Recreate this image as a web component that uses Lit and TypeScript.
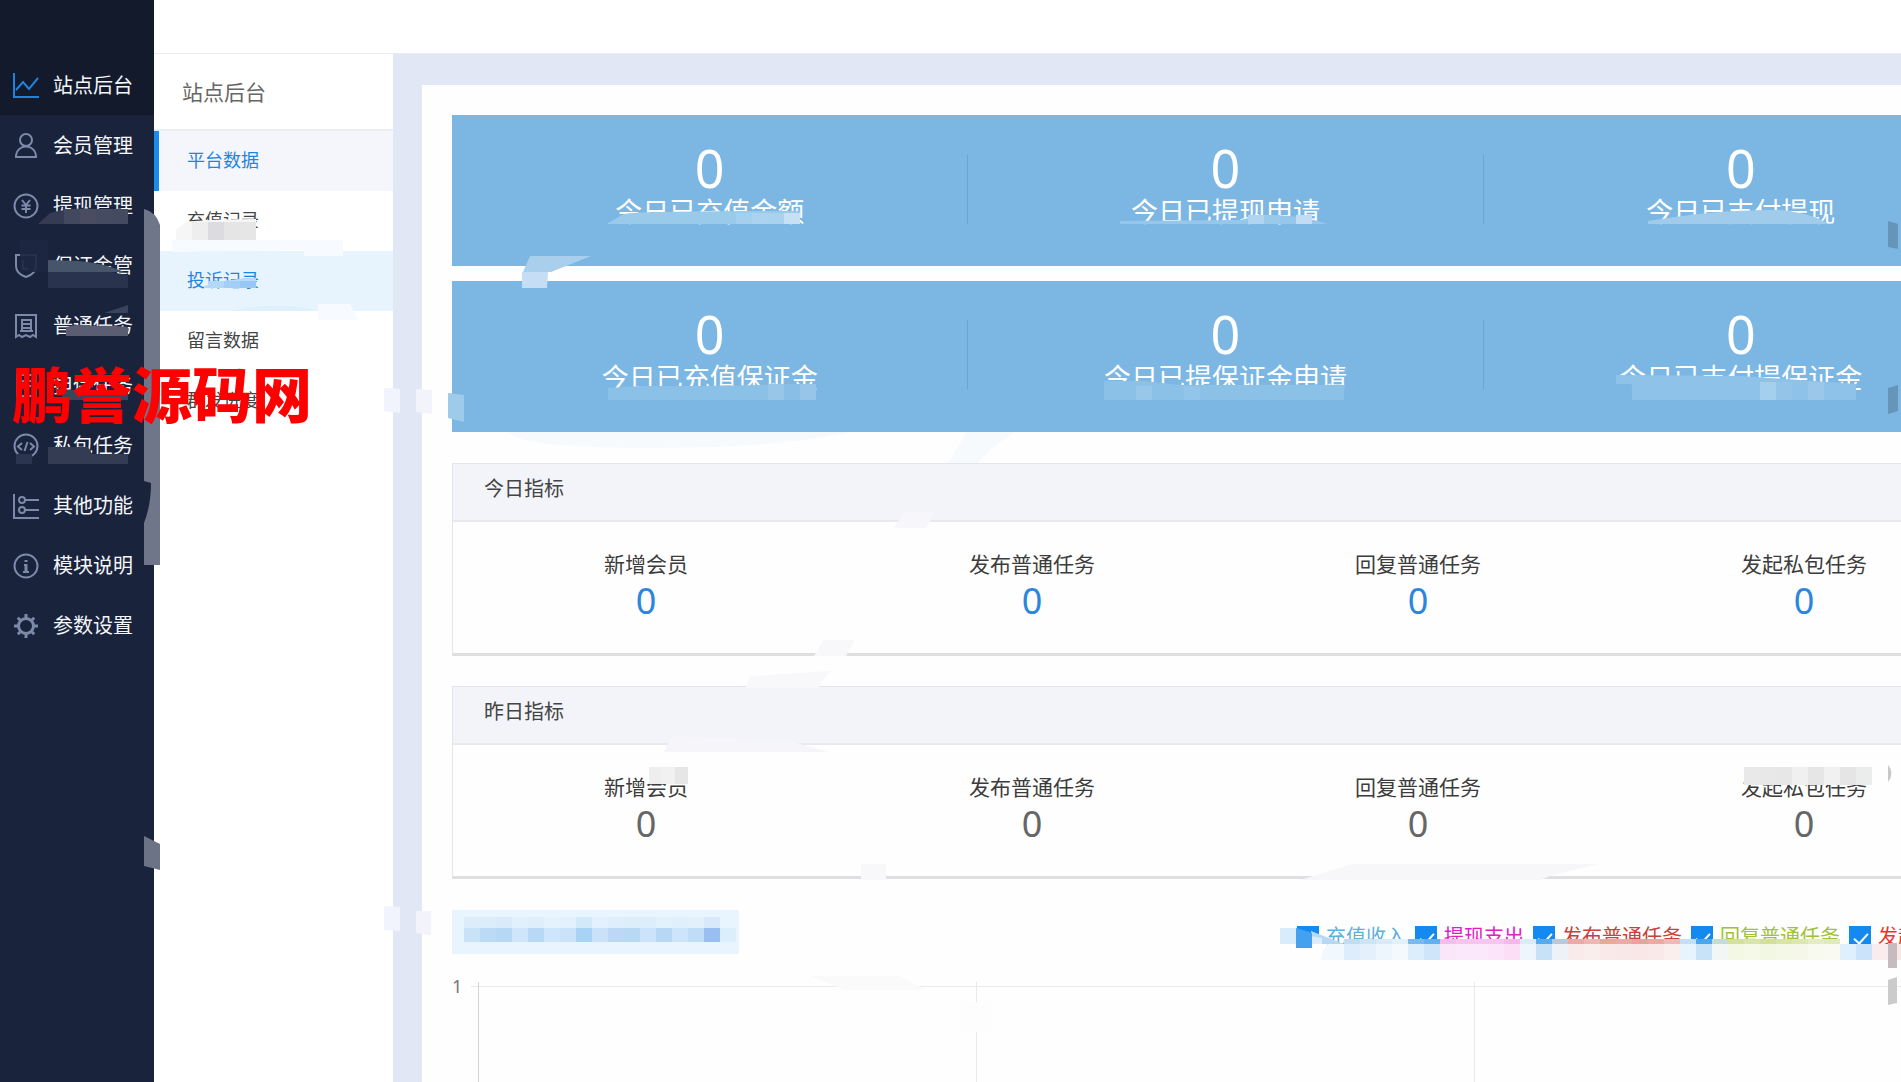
import { LitElement, html, css, svg, type TemplateResult } from "lit";
import { customElement, state } from "lit/decorators.js";

const icons: Record<string, TemplateResult> = {
  chart: svg`<path d="M1 0v24h25M3 17l7-8 6 7 9-11"/>`,
  user: svg`<circle cx="13" cy="7" r="6"/><path d="M3 24c0-14 20-14 20 0z"/>`,
  yen: svg`<circle cx="13" cy="13" r="11.5"/><path d="M9 7l4 5 4-5M13 12v8M8.500 12.500h9M8.500 16h9"/>`,
  shield: svg`<path d="M3 2h20v11c0 6-4 9-10 11C7 22 3 19 3 13zM10 7v9h5"/>`,
  receipt: svg`<path d="M3 2h20v22l-3-2-3 2-4-2-4 2-3-2-3 2zM9 18V7h9v11M9 11h9M9 15h9M7 18h13"/>`,
  deposit: svg`<path d="M4 2h19v21H4zM9 8h9M9 13h9"/>`,
  code: svg`<circle cx="13" cy="13" r="11.500"/><path d="M9 10l-4 3.500 4 3.500M17 10l4 3.500-4 3.500M14.500 9l-3 9"/>`,
  sliders: svg`<path d="M1 1v24h25M12 7h14M12 17h14"/><circle cx="9" cy="7" r="3"/><circle cx="9" cy="17" r="3"/>`,
  info: svg`<circle cx="13" cy="13" r="11.500"/><path d="M13 11v8M13 7v2" stroke-width="3"/><path d="M11 12h2M10 19h6"/>`,
  gear: svg`<circle cx="13" cy="13" r="7.500" stroke-width="3"/><path stroke-width="3" d="M13 5V1M13 25v-4M5 13H1M25 13h-4M7.300 7.300L4.800 4.800M21.200 21.200l-2.500-2.500M7.300 18.700l-2.500 2.500M21.200 4.800l-2.500 2.500"/>`,
};

const modules = [
  ["chart", "站点后台"], ["user", "会员管理"], ["yen", "提现管理"], ["shield", "保证金管"],
  ["receipt", "普通任务"], ["deposit", "担保任务"], ["code", "私包任务"], ["sliders", "其他功能"],
  ["info", "模块说明"], ["gear", "参数设置"],
];
const pages = ["平台数据", "充值记录", "投诉记录", "留言数据", "群发进度"];
const totals = [
  ["今日已充值金额", "今日已提现申请", "今日已支付提现"],
  ["今日已充值保证金", "今日已提保证金申请", "今日已支付提保证金"],
];
const metrics = ["新增会员", "发布普通任务", "回复普通任务", "发起私包任务"];
const series = [
  { name: "充值收入", color: "#5cb0dc" },
  { name: "提现支出", color: "#e020c4" },
  { name: "发布普通任务", color: "#c8403a" },
  { name: "回复普通任务", color: "#a0c234" },
  { name: "发起私包任务", color: "#e8352c" },
];

/** One smudge: fill, path data and optional opacity. */
type Smudge = [string, string, number?];
/** A row of equal tiles: x, y, tile width, tile height, fills ("" leaves a gap). */
type Tiles = [number, number, number, number, string[]];

const smudges: Smudge[] = [
  // left navigation
  ["#343b53", "M38 224L50 213Q70 207 100 209H128V224H38z"],
  ["#1d2741", "M20 240h28v32H20z", 0.9],
  ["#46556a", "M48 260L78 261Q110 264 128 274V272H48z"],
  ["#2a334d", "M48 272H110L128 275V288H48z"],
  ["#39435b", "M104 313L128 305V313z"],
  ["#5b5d73", "M66 327Q80 323 94 326Q110 325 128 327V336H66z"],
  ["#3c4459", "M62 390h66v10H62z"],
  ["#2c3550", "M16 454h16v10H16z"],
  ["#343c54", "M48 447H88L92 454H128V464H48z"],
  // page list
  ["#f6f6f6", "M176 230L186 222Q210 219 256 219V240H176z"],
  ["#f7fbff", "M172 240H343V256H304V250L172 252z"],
  ["#b9dafa", "M204 286Q230 278 256 278V288H204z"],
  ["#f7fbff", "M318 304H350L358 320H318z"],
  ["#dff0fd", "M230 311Q280 300 318 311z"],
  // frame edge
  ["#f1f4fc", "M384 388l16 1v24l-16-2z"], ["#f2f3fb", "M416 389l16 1v24l-16-2z"],
  ["#f1f4fc", "M384 906l16 1v24l-16-1z"], ["#f2f3fb", "M416 911h15v24l-15-2z"],
  ["#9dcbe9", "M448 393l16 2v27l-16-4z"],
  // summary cards
  ["#aacfed", "M530 256H591L551 272H523z"], ["#c6def5", "M522 272H548L547 288H522z"],
  ["#9acaea", "M608 223L624 214Q640 211 800 211V224H608z"],
  ["#96c6ea", "M1120 224V221L1240 220Q1280 209 1328 224z"],
  ["#a0cbeb", "M1648 224V221Q1720 209 1780 210Q1815 214 1828 224z"],
  ["#8bc0e7", "M608 388L640 386H700L816 384V400H608z"],
  ["#8bc0e7", "M1104 381H1144L1180 385H1344V400H1104z"],
  ["#8fc2e8", "M1616 375L1740 376L1856 384V400H1632V384H1616z"],
  ["#f7fafd", "M507 432H850Q780 448 650 448T507 432z"],
  ["#f7fafd", "M967 432H1014L990 450L978 463H948z"],
  // panels
  ["#f6f6fb", "M904 512H935L926 528H894z"],
  ["#f8f8fa", "M824 640H855L846 656H814z"],
  ["#f8f8fb", "M750 676L830 671L818 688H745z"],
  ["#f5f5fa", "M672 736L790 741L828 752H664z"],
  ["#f8f8fa", "M861 864h25v16h-25z"],
  ["#f7f7f9", "M1352 864H1598L1550 876L1540 880H1300z"],
  ["#fafafa", "M810 976H900L926 990H845z"],
  ["#fdfdfd", "M961 1002h30v30h-30z"],
  // legend
  ["#d9ecfb", "M1280 928h16v20h-16z"], ["#b6d8f3", "M1311 931L1344 944H1311z"],
  ["#fefefe", "M1280 944h42v5h-42z"],
  ["#dcecfa", "M1311 936L1322 938V944H1311z"],
  ["#43a1f0", "M1296 928L1312 933V948H1296z"],
  ["#f1f8fe", "M1328 944H1408V960H1321Q1322 950 1328 944z"],
];

const grey: Smudge[] = [
  ["#70768a", "M144 209Q156 212 160 225V565H144V523Q151 505 151 483L144 481z"],
  ["#6d7387", "M144 836l16 8v26l-16-4z"],
  ["#6596ba", "M1888 221l10 3v25l-10-2z"], ["#6596ba", "M1888 388l10-3v26l-10 3z"],
  ["#c8c8c8", "M1888 765q7 8 0 17z"],
  ["#c6bcc0", "M1888 943h9v25h-9z"], ["#cbcbcb", "M1888 980l9-3v26l-9 2z"],
];

const tiles: Tiles[] = [
  [48, 209, 16, 15, ["", "#42485e", "#4a4d62", "#454b61", "#444a60"]],
  [192, 222, 16, 18, ["#eeeeee", "#dcdce0", "#e5e5e6", "#e6e6e6"]],
  [192, 281, 16, 7, ["", "#b4d8fa", "#a5cef6", "#98c7f5"]],
  [736, 213, 16, 11, ["#a5d0ed", "#abd2ee", "#a9d2ee", "#c6e1f4"]],
  [1248, 215, 16, 9, ["#b1d5f0", "#9acaea", "", "#c2ddf3"]],
  [768, 384, 16, 16, ["#97c6e9", "#89bfe6", "#96c5e9"]],
  [1136, 386, 16, 14, ["#99c7ea", "", "", "#93c4e9"]],
  [1760, 382, 16, 18, ["#a5d0ed", "#94c5e9", "", "#9bc8ea"]],
  [649, 767, 13, 17, ["#eeeeee", "#f1f1f1", "#e6e6e6"]],
  [1744, 767, 16, 18, ["#e9e9ea", "#e8e8e8", "#e7e7e8", "#f0f0f0", "#e6e6e6", "#f1f1f1", "#e5e5e5", "#ebecec"]],
  [464, 917, 16, 11, ["#dcecfa", "#dbedfa", "#d9ebfa", "#e0f0fc", "#deeefb", "#e4f2fd", "#e2f1fd", "#d2e9fa", "#e2f1fd", "#deeefc", "#dbeefa", "#dceefb", "#e2f2fd", "#dfeffc", "#e2f0fc", "#d7e9fa"]],
  [464, 928, 16, 14, ["#c8e2f7", "#bbdaf5", "#b7d8f4", "#cfe5fa", "#b7d9f5", "#cee6fb", "#cae3f9", "#a9d3f4", "#c9e1f9", "#bdd8f6", "#b7d9f4", "#cce4fb", "#b6d8f5", "#cde5fb", "#c0ddf7", "#98bef2", "#dbeefc"]],
  [1344, 939, 16, 5, ["#c0def0", "#cde4f3", "#d8eaf6", "#e2f0fa", "#78b9ef", "#62b0f0", "#f3bdec", "#f6c4ef", "#f5c4ef", "#f5c6f0", "#f5b8ed", "#dcebf8", "#55aaf0", "#b9c9da", "#e9aaa8", "#eeb7b3", "#e9a7a2", "#eaaaa6", "#e7a39e", "#ebaaa4", "#f0b9b4", "#c4dff5", "#4ba6f0", "#c4ddd0", "#d5e19b", "#d9e5a6", "#d4e09a", "#d8e5a3", "#dce8ad", "#e5edbf", "#e0ebbd"]],
  [1344, 944, 16, 16, ["#ddedfb", "#e4f1fc", "#edf6fd", "#f3f9fd", "#dcedfb", "#cfe5f9", "#fbe5f9", "#fce8fb", "#fce8fb", "#fce5fa", "#fcdff7", "#eef5fc", "#c7e1f7", "#edf1f8", "#f9ebea", "#faeeed", "#f9e9e8", "#f8e9e8", "#f8e7e6", "#f9eae9", "#fbefee", "#e7f4fe", "#c8e2f8", "#f2f6f5", "#f3f8e4", "#f5f9e8", "#f2f7e3", "#f4f8e6", "#f5f8e9", "#f8faef", "#f9fbf2", "#def0fd", "#cce4fb", "#faecee", "#fbe7e7"]],
];

@customElement("app-root")
export class AppRoot extends LitElement {
  @state() private shown = series.map(() => true);

  static styles = css`
    :host {
      display: block;
      position: relative;
      height: 100vh;
      overflow: hidden;
      background: #fff;
      color: #444;
      font-family: "Noto Sans", "Noto Sans CJK SC", sans-serif;
      font-size: 20px;
    }
    * { box-sizing: border-box; }
    a { color: inherit; text-decoration: none; }
    .shell { display: flex; height: 100%; }
    .modules {
      flex: 0 0 154px;
      padding-top: 56px;
      background: linear-gradient(#131a2b 115px, #19233c 115px);
    }
    .module {
      display: flex;
      align-items: center;
      gap: 13px;
      height: 60px;
      padding-left: 13px;
      color: #f4f6fa;
      line-height: 30px;
      white-space: nowrap;
    }
    .icon {
      flex: none;
      width: 27px;
      height: 27px;
      fill: none;
      stroke: #7c89a8;
      stroke-width: 2;
    }
    .module.active .icon { stroke: #1f82dc; }
    .page { flex: 1; min-width: 0; display: flex; flex-direction: column; }
    .topbar { flex: none; height: 54px; border-bottom: 1px solid #e8eaee; }
    .body { flex: 1; min-height: 0; display: flex; }
    .pages { flex: 0 0 239px; }
    .heading {
      margin: 0;
      height: 77px;
      padding-left: 28px;
      border-bottom: 2px solid #ebedf2;
      color: #666;
      font-size: 21px;
      font-weight: 400;
      line-height: 76px;
    }
    .link {
      display: block;
      height: 60px;
      padding-left: 28px;
      border-left: 5px solid transparent;
      font-size: 18px;
      line-height: 58px;
    }
    .link.active { border-color: #188cf0; background: #f4f6fb; color: #1f85e0; }
    .link.hover { background: #e7f4fe; color: #1f85e0; }
    .main {
      flex: 1;
      min-width: 0;
      display: flex;
      padding: 31px 0 0 29px;
      background: #e1e7f5;
      overflow: hidden;
    }
    .card {
      flex: 1 0 auto;
      display: flex;
      flex-direction: column;
      min-width: 1606px;
      padding: 30px 30px 0;
      background: #fefefe;
    }
    .totals {
      flex: none;
      display: grid;
      grid-template-columns: repeat(3, 1fr);
      align-items: center;
      height: 151px;
      margin-bottom: 15px;
      padding-bottom: 4px;
      background: #7cb7e4;
      color: #fff;
      text-align: center;
    }
    .total + .total { border-left: 1px solid #69a6d4; }
    .total {
      display: flex;
      flex-direction: column;
      justify-content: center;
      height: 70px;
      padding-bottom: 6px;
    }
    .amount { font-size: 52px; line-height: 52px; }
    .caption { font-size: 27px; line-height: 36px; }
    .panel {
      flex: none;
      margin: 16px 0 14px;
      border: 1px solid #e4e5e9;
      border-bottom: 3px solid #dedfe1;
    }
    .panel h3 {
      margin: 0;
      height: 58px;
      padding-left: 31px;
      border-bottom: 2px solid #e8e9ec;
      background: #f3f4f9;
      font-size: 20px;
      font-weight: 400;
      line-height: 50px;
    }
    .metrics {
      display: grid;
      grid-template-columns: repeat(4, 1fr);
      height: 131px;
      padding-top: 26px;
      text-align: center;
    }
    .name { font-size: 21px; line-height: 32px; color: #3c3c3c; }
    .value { font-size: 36px; line-height: 42px; color: #666; }
    .value.today { color: #2d86dc; }
    .charthead {
      flex: none;
      display: flex;
      justify-content: space-between;
      margin-top: 17px;
    }
    .charttitle { width: 287px; height: 44px; background: #e8f5fe; }
    .legend { display: flex; gap: 9px; height: 54px; align-items: center; }
    .series { display: flex; align-items: center; gap: 7px; white-space: nowrap; line-height: 24px; }
    .tick {
      appearance: none;
      position: relative;
      width: 22px;
      height: 22px;
      margin: 0;
      background: #148af0;
    }
    .tick:checked::after {
      content: "";
      position: absolute;
      left: 8px;
      top: 4px;
      width: 6px;
      height: 12px;
      border: solid #fff;
      border-width: 0 2px 2px 0;
      transform: rotate(42deg);
    }
    .plot {
      flex: 1;
      min-height: 0;
      display: flex;
      gap: 9px;
      padding-top: 12px;
      font-size: 18px;
      line-height: 20px;
      color: #777;
      overflow: hidden;
    }
    .lines { flex: 1; height: 100%; fill: none; stroke: #e9e9e9; }
    .overlay {
      position: absolute;
      top: 0;
      left: 0;
      width: 1901px;
      height: 1082px;
      pointer-events: none;
    }
    .watermark {
      position: absolute;
      left: 12px;
      top: 348px;
      color: #fe0000;
      font-family: "Noto Sans CJK SC", sans-serif;
      font-size: 60px;
      font-weight: 900;
      line-height: 88px;
      white-space: nowrap;
    }
  `;

  private toggle(i: number) {
    this.shown = this.shown.map((on, n) => (n === i ? !on : on));
  }

  private renderPanel(title: string, kind: string) {
    return html`<section class="panel">
      <h3>${title}</h3>
      <div class="metrics">
        ${metrics.map((m) => html`<div><div class="name">${m}</div><div class="value ${kind}">0</div></div>`)}
      </div>
    </section>`;
  }

  render() {
    return html`
      <div class="shell">
        <nav class="modules">
          ${modules.map(([icon, label], i) => html`
            <a class="module ${i === 0 ? "active" : ""}" href="#">
              <svg class="icon" viewBox="0 0 27 27">${icons[icon]}</svg><span>${label}</span>
            </a>`)}
        </nav>
        <div class="page">
          <header class="topbar"></header>
          <div class="body">
            <nav class="pages">
              <h2 class="heading">站点后台</h2>
              ${pages.map((p, i) => html`<a class="link ${["active", "", "hover"][i] ?? ""}" href="#">${p}</a>`)}
            </nav>
            <main class="main">
              <div class="card">
                ${totals.map((row) => html`<section class="totals">
                  ${row.map((t) => html`<div class="total"><div class="amount">0</div><div class="caption">${t}</div></div>`)}
                </section>`)}
                ${this.renderPanel("今日指标", "today")}
                ${this.renderPanel("昨日指标", "")}
                <div class="charthead">
                  <div class="charttitle"></div>
                  <div class="legend">
                    ${series.map((s, i) => html`<label class="series" style="color:${s.color}">
                      <input class="tick" type="checkbox" .checked=${this.shown[i]} @change=${() => this.toggle(i)} />${s.name}
                    </label>`)}
                  </div>
                </div>
                <div class="plot">
                  <span>1</span>
                  <svg class="lines">
                    <path d="M0 10.500H1540" />
                    <path d="M7.500 6V400" stroke="#d4d4d4" />
                    <path d="M505.500 6V400M1003.500 6V400" />
                  </svg>
                </div>
              </div>
            </main>
          </div>
        </div>
      </div>
      <svg class="overlay" viewBox="0 0 1901 1082" aria-hidden="true">
        ${smudges.map(([fill, d, o]) => svg`<path d=${d} fill=${fill} opacity=${o ?? 1} />`)}
        ${tiles.map(([x, y, w, h, fills]) => fills.map((f, i) =>
          f ? svg`<rect x=${x + i * w} y=${y} width=${w} height=${h} fill=${f} shape-rendering="crispEdges" />` : ""))}
        ${grey.map(([fill, d]) => svg`<path d=${d} fill=${fill} />`)}
      </svg>
      <div class="watermark">鹏誉源码网</div>
    `;
  }
}
